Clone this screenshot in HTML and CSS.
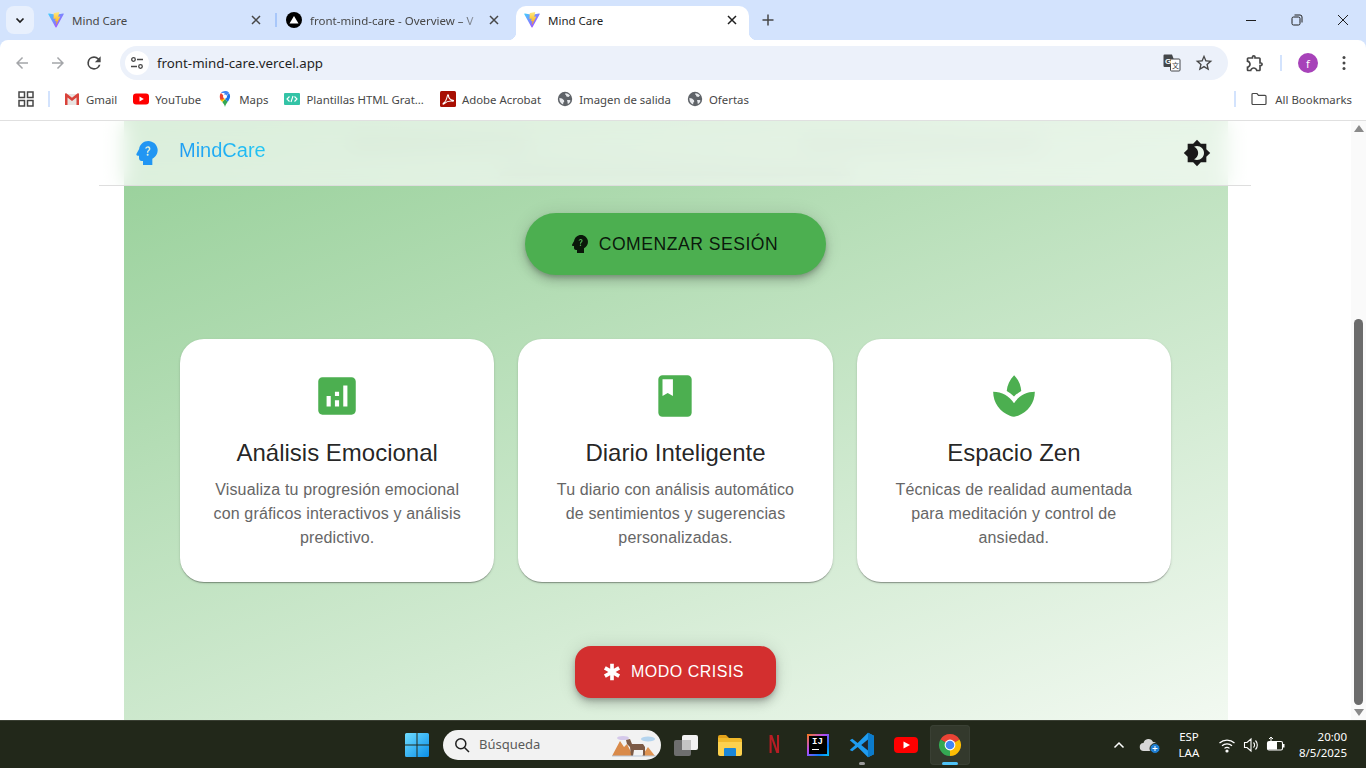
FILE: index.html
```html
<!DOCTYPE html>
<html lang="en">
  <head>
    <meta charset="UTF-8" />
    <meta name="viewport" content="width=device-width, initial-scale=1.0" />
    <title>Mind Care</title>
    <link rel="stylesheet" href="styles.css">
  </head>
  <body>
    <svg class="defs" width="0" height="0">
      <defs>
        <linearGradient id="viteBody" x1="0" y1="0" x2="1" y2="1">
          <stop offset="0" stop-color="#41d1ff" />
          <stop offset="1" stop-color="#bd34fe" />
        </linearGradient>
        <linearGradient id="viteBolt" x1="0" y1="0" x2="0" y2="1">
          <stop offset="0" stop-color="#ffea83" />
          <stop offset="1" stop-color="#ffa800" />
        </linearGradient>
        <symbol id="vite" viewBox="0 0 16 16">
          <path fill="url(#viteBody)" d="M.3 2.3 7.5 15.3c.2.4.8.4 1 0l7.2-13c.2-.4-.1-.9-.6-.8L8 2.7 1 1.5c-.5-.1-.9.4-.7.8z" />
          <path fill="url(#viteBolt)" d="M11.2.1 6 1.1c-.1 0-.2.1-.2.2l-.3 5.4c0 .1.1.2.3.2l1.4-.3c.2 0 .3.1.3.3l-.4 2c0 .2.1.3.3.3l.9-.3c.2 0 .3.1.3.3l-.7 3.2c0 .2.2.3.3.1l.1-.1 3.9-7.7c.1-.2-.1-.3-.2-.3l-1.4.3c-.2 0-.3-.1-.3-.3l.9-3.9c.1-.2-.1-.4-.3-.3z" />
        </symbol>
        <symbol id="globe" viewBox="0 0 16 16">
          <circle cx="8" cy="8" r="7.2" fill="#5f6368" />
          <path fill="#e8eaed" d="M8.5 2.2c2 .1 3.6 1 4.5 2.3l-1.6 1.4-1.9-.3-.6-1.5L8 3.3zM2.4 7l2.6.5 2 1.7.2 1.5-1 1v1.7C4.2 13 2.4 10.800 2.400 8zM10 9h2.800l.7.7c-.4 1.400-1.400 2.600-2.700 3.200l-.3-2z" />
        </symbol>
      </defs>
    </svg>

    <!-- Browser tabs -->
    <div class="tab-strip">
      <div class="tab-search">
        <svg viewBox="0 0 12 12" width="12" height="12"><path d="M2.500 4.500 6 8l3.500-3.500" fill="none" stroke="#1f1f1f" stroke-width="1.700" /></svg>
      </div>
      <div class="tab tab-first">
        <svg class="favicon" width="16" height="16"><use href="#vite" /></svg>
        <span class="tab-title">Mind Care</span>
        <svg class="tab-close" viewBox="0 0 16 16" width="16" height="16"><path d="M4 4l8 8M12 4l-8 8" /></svg>
      </div>
      <div class="tab-sep"></div>
      <div class="tab tab-second">
        <svg class="favicon" viewBox="0 0 16 16" width="16" height="16"><circle cx="8" cy="8" r="8" fill="#000" /><path d="M8 4l4.500 7.500h-9z" fill="#fff" /></svg>
        <span class="tab-title tab-title-fade">front-mind-care - Overview – V</span>
        <svg class="tab-close" viewBox="0 0 16 16" width="16" height="16"><path d="M4 4l8 8M12 4l-8 8" /></svg>
      </div>
      <div class="tab tab-active">
        <svg class="favicon" width="16" height="16"><use href="#vite" /></svg>
        <span class="tab-title">Mind Care</span>
        <svg class="tab-close" viewBox="0 0 16 16" width="16" height="16"><path d="M4 4l8 8M12 4l-8 8" /></svg>
      </div>
      <svg class="tab-new" viewBox="0 0 16 16" width="16" height="16"><path d="M8 2.500v11M2.500 8h11" /></svg>
      <div class="window-controls">
        <svg viewBox="0 0 12 12" width="12" height="12"><path d="M1 6.500h10" /></svg>
        <svg viewBox="0 0 12 12" width="12" height="12"><rect x="1" y="3" width="8" height="8" rx="1.500" /><path d="M3.500 1h5.500a2 2 0 0 1 2 2v5.500" /></svg>
        <svg viewBox="0 0 12 12" width="12" height="12"><path d="M1 1l10 10M11 1L1 11" /></svg>
      </div>
    </div>

    <!-- Address bar -->
    <div class="toolbar">
      <div class="tool-btn"><svg viewBox="0 0 24 24" width="18" height="18"><path fill="#a4a6a9" d="M20 11H7.830l5.590-5.590L12 4l-8 8 8 8 1.410-1.410L7.830 13H20z" /></svg></div>
      <div class="tool-btn"><svg viewBox="0 0 24 24" width="18" height="18"><path fill="#a4a6a9" d="M4 11h12.170l-5.590-5.590L12 4l8 8-8 8-1.410-1.410L16.170 13H4z" /></svg></div>
      <div class="tool-btn"><svg viewBox="0 0 24 24" width="20" height="20"><path fill="#474747" d="M17.650 6.350A7.960 7.960 0 0 0 12 4a8 8 0 1 0 7.730 10h-2.080A6 6 0 1 1 12 6c1.660 0 3.140.690 4.220 1.780L13 11h7V4l-2.350 2.350z" /></svg></div>
      <div class="omnibox">
        <div class="site-info">
          <svg viewBox="0 0 16 16" width="16" height="16" fill="none" stroke="#474747" stroke-width="1.300"><circle cx="4.500" cy="4.500" r="1.800" /><path d="M8 4.500h6M2 11.500h6" /><circle cx="11.500" cy="11.500" r="1.800" /></svg>
        </div>
        <span class="url">front-mind-care.vercel.app</span>
        <div class="omni-btn">
          <svg viewBox="0 0 18 18" width="18" height="18">
            <path fill="#44474a" d="M1.500 .5h7.500l1.500 4v8.500h-9a1 1 0 0 1-1-1v-10.500a1 1 0 0 1 1-1z" />
            <rect x="7.500" y="5" width="9.500" height="12" rx="1" fill="#fff" stroke="#44474a" />
            <text x="2" y="10" class="translate-g">G</text>
            <text x="9" y="14" class="translate-a">文</text>
          </svg>
        </div>
        <div class="omni-btn">
          <svg viewBox="0 0 24 24" width="20" height="20"><path fill="#474747" d="M22 9.240l-7.190-.620L12 2 9.190 8.630 2 9.240l5.460 4.730L5.820 21 12 17.270 18.180 21l-1.630-7.030L22 9.240zM12 15.400l-3.760 2.270 1-4.280-3.320-2.880 4.380-.380L12 6.100l1.710 4.040 4.380.380-3.320 2.880 1 4.280L12 15.400z" /></svg>
        </div>
      </div>
      <div class="tool-btn tool-ext"><svg viewBox="0 0 24 24" width="20" height="20"><path fill="#474747" d="M10.500 4.500c.280 0 .5.220.5.5v2h6v6h2c.280 0 .5.220.5.5s-.220.5-.5.5h-2v6h-2.120c-.680-1.750-2.390-3-4.380-3s-3.700 1.250-4.380 3H4v-2.120c1.750-.680 3-2.390 3-4.380 0-1.990-1.240-3.700-2.990-4.380L4 7h6V5c0-.280.220-.5.5-.5m0-2C9.120 2.500 8 3.620 8 5H4c-1.100 0-1.990.9-1.990 2v3.800h.290c1.490 0 2.700 1.210 2.700 2.700s-1.210 2.700-2.700 2.700H2V20c0 1.100.9 2 2 2h3.800v-.3c0-1.490 1.210-2.700 2.700-2.700s2.700 1.210 2.700 2.700v.3H17c1.100 0 2-.9 2-2v-4c1.380 0 2.500-1.120 2.500-2.500S20.380 11 19 11V7c0-1.100-.9-2-2-2h-4c0-1.380-1.120-2.500-2.500-2.500z" /></svg></div>
      <div class="tool-sep"></div>
      <div class="tool-btn tool-avatar"><span class="avatar">f</span></div>
      <div class="tool-btn tool-menu"><svg viewBox="0 0 16 16" width="16" height="16"><circle cx="8" cy="2.500" r="1.500" fill="#474747" /><circle cx="8" cy="8" r="1.500" fill="#474747" /><circle cx="8" cy="13.500" r="1.500" fill="#474747" /></svg></div>
    </div>

    <!-- Bookmarks -->
    <div class="bookmarks">
      <svg class="bm-apps" viewBox="0 0 16 16" width="16" height="16" fill="none" stroke="#474747" stroke-width="1.500"><rect x="1" y="1" width="5.500" height="5.500" /><rect x="9.500" y="1" width="5.500" height="5.500" /><rect x="1" y="9.500" width="5.500" height="5.500" /><rect x="9.500" y="9.500" width="5.500" height="5.500" /></svg>
      <div class="bm-sep"></div>
      <div class="bm">
        <svg viewBox="0 0 16 16" width="16" height="16"><path fill="#e8e3e1" d="M1 3h14v11H1z" /><path fill="#d9423a" d="M1 3.200V14h2.500V6.500L8 10l4.500-3.500V14H15V3.200c0-.8-1-1.200-1.600-.7L8 6.700 2.600 2.500C2 2 1 2.400 1 3.200z" /></svg>
        <span>Gmail</span>
      </div>
      <div class="bm">
        <svg viewBox="0 0 16 16" width="16" height="16"><rect y="2.500" width="16" height="11" rx="3" fill="#f00" /><path d="M6.500 5.500 10.800 8l-4.300 2.500z" fill="#fff" /></svg>
        <span>YouTube</span>
      </div>
      <div class="bm">
        <svg viewBox="0 0 16 16" width="16" height="16">
          <path fill="#34a853" d="M8 16c-.4-2-1.500-3.500-2.700-5L8 8l2.800 2.800C9.500 12.500 8.400 14 8 16z" />
          <path fill="#fbbc04" d="M3 8.200c.6 1.100 1.400 1.900 2.300 2.800L8 8 5.800 5.500z" />
          <path fill="#4285f4" d="M8 0c1.500 0 3 .7 3.900 1.900L8 6.500 7 5z" />
          <path fill="#ea4335" d="M4 1.900 7.900 6 5.800 8.500 3.300 8.500C2.500 6 2.500 3.500 4 1.900z" />
          <path fill="#1a73e8" d="M11.900 1.900c1.600 2 1.500 4.700.2 6.700-.4.800-.8 1.500-1.300 2.200L8 8z" />
          <path fill="#4285f4" d="M11.900 1.900 4 1.900C5 .7 6.500 0 8 0s3 .7 3.900 1.900z" />
          <circle cx="8" cy="5.400" r="2" fill="#fff" />
        </svg>
        <span>Maps</span>
      </div>
      <div class="bm">
        <svg viewBox="0 0 16 16" width="16" height="16"><rect y="2" width="16" height="12" rx="1" fill="#33c3a6" /><path d="M5.500 5.500 3 8l2.500 2.500M10.500 5.500 13 8l-2.500 2.500M9 5 7 11" fill="none" stroke="#fff" stroke-width="1.100" /></svg>
        <span>Plantillas HTML Grat...</span>
      </div>
      <div class="bm">
        <svg viewBox="0 0 16 16" width="16" height="16"><rect width="16" height="16" rx="1.500" fill="#a80f03" /><path d="M3 12.500c2-1 3.500-3.500 4.500-8 .1-1 1.100-1 1 0-.2 2 1.500 4.500 4.500 4.800.8.100.6.900-.2.800-3-.3-6.500.5-8.500 2.500-1 .9-1.900.4-.8-.1z" fill="none" stroke="#fff" stroke-width="1.100" /></svg>
        <span>Adobe Acrobat</span>
      </div>
      <div class="bm">
        <svg width="16" height="16"><use href="#globe" /></svg>
        <span>Imagen de salida</span>
      </div>
      <div class="bm">
        <svg width="16" height="16"><use href="#globe" /></svg>
        <span>Ofertas</span>
      </div>
      <div class="bm-sep bm-sep-right"></div>
      <div class="bm bm-all">
        <svg viewBox="0 0 16 16" width="16" height="16"><path d="M1 3.500a1 1 0 0 1 1-1h4l1.500 1.800H14a1 1 0 0 1 1 1v7.200a1 1 0 0 1-1 1H2a1 1 0 0 1-1-1z" fill="none" stroke="#474747" stroke-width="1.200" /></svg>
        <span>All Bookmarks</span>
      </div>
    </div>

    <!-- Page -->
    <div class="page">
      <div class="page-main">
        <header class="app-header">
          <svg class="brand-icon" viewBox="0 0 24 24" width="32" height="32"><path d="M19.940 9.060C19.500 5.730 16.570 3 13 3 9.470 3 6.570 5.610 6.080 9l-1.930 3.480c-.410.660.070 1.520.850 1.520h1v2c0 1.100.9 2 2 2h1v3h7v-4.680c2.620-1.250 4.350-4.080 3.940-7.260zM12.500 14c-.410 0-.740-.330-.740-.740s.330-.730.740-.730c.410 0 .730.320.730.730s-.320.740-.730.740zm1.760-4.320c-.440.650-.860.850-1.090 1.270-.090.170-.130.280-.130.820h-1.060c0-.290-.040-.750.180-1.160.280-.510.830-.810 1.140-1.260.330-.470.150-1.360-.8-1.360-.620 0-.920.470-1.050.86l-.960-.4C11.220 7.680 11.760 7 12.710 7c.790 0 1.330.360 1.600.81.240.39.370 1.120.010 1.870z" /></svg>
          <span class="brand-name">MindCare</span>
          <svg class="theme-icon" viewBox="0 0 24 24" width="28" height="28"><path d="M20 8.690V4h-4.690L12 .69 8.690 4H4v4.690L.69 12 4 15.310V20h4.690L12 23.310 15.310 20H20v-4.690L23.310 12 20 8.690zM12 18c-.890 0-1.740-.2-2.500-.55C11.560 16.500 13 14.420 13 12s-1.440-4.500-3.500-5.450C10.260 6.200 11.110 6 12 6c3.310 0 6 2.690 6 6s-2.690 6-6 6z" /></svg>
        </header>

        <main class="panel">
          <!-- what has scrolled under the header, only seen through the blur -->
          <div class="under-header">
            <div class="streak-row"><span class="streak streak-a"></span><span class="streak streak-b"></span></div>
            <div class="streak-row streak-row-low"><span class="streak streak-c"></span></div>
          </div>

          <button class="btn-start">
            <svg viewBox="0 0 24 24" width="24" height="24"><path d="M19.940 9.060C19.500 5.730 16.570 3 13 3 9.470 3 6.570 5.610 6.080 9l-1.930 3.480c-.410.660.070 1.520.850 1.520h1v2c0 1.100.9 2 2 2h1v3h7v-4.680c2.620-1.250 4.350-4.080 3.940-7.260zM12.500 14c-.410 0-.740-.330-.740-.740s.330-.730.740-.730c.410 0 .730.320.730.730s-.320.740-.730.740zm1.760-4.320c-.440.650-.860.850-1.090 1.270-.090.170-.130.280-.130.820h-1.060c0-.290-.040-.750.180-1.160.280-.510.830-.810 1.140-1.260.330-.470.150-1.360-.8-1.360-.620 0-.920.470-1.050.86l-.960-.4C11.220 7.680 11.760 7 12.710 7c.790 0 1.330.360 1.600.81.240.39.370 1.120.010 1.870z" /></svg>
            COMENZAR SESIÓN
          </button>

          <div class="cards">
            <div class="card">
              <svg viewBox="0 0 24 24" width="50" height="50"><path d="M19 3H5c-1.100 0-2 .9-2 2v14c0 1.100.9 2 2 2h14c1.100 0 2-.9 2-2V5c0-1.100-.9-2-2-2zM9 17H7v-5h2v5zm4 0h-2v-3h2v3zm0-5h-2v-2h2v2zm4 5h-2V7h2v10z" /></svg>
              <h3>Análisis Emocional</h3>
              <p>Visualiza tu progresión emocional con gráficos interactivos y análisis predictivo.</p>
            </div>
            <div class="card">
              <svg viewBox="0 0 24 24" width="50" height="50"><path d="M18 2H6c-1.100 0-2 .9-2 2v16c0 1.100.9 2 2 2h12c1.100 0 2-.9 2-2V4c0-1.100-.9-2-2-2zM6 4h5v8l-2.500-1.500L6 12V4z" /></svg>
              <h3>Diario Inteligente</h3>
              <p>Tu diario con análisis automático de sentimientos y sugerencias personalizadas.</p>
            </div>
            <div class="card">
              <svg viewBox="0 0 24 24" width="50" height="50"><path d="M15.490 9.630c-.180-2.790-1.310-5.510-3.430-7.630-2.140 2.140-3.320 4.860-3.550 7.630 1.280.680 2.460 1.560 3.490 2.630 1.030-1.060 2.210-1.940 3.490-2.630zM12 15.450C9.850 12.170 6.180 10 2 10c0 5.320 3.360 9.820 8.030 11.490.630.230 1.290.4 1.970.51.680-.120 1.330-.290 1.970-.51C18.640 19.820 22 15.320 22 10c-4.180 0-7.850 2.170-10 5.450z" /></svg>
              <h3>Espacio Zen</h3>
              <p>Técnicas de realidad aumentada para meditación y control de ansiedad.</p>
            </div>
          </div>

          <button class="btn-crisis">
            <svg viewBox="0 0 24 24" width="22" height="22"><path d="m20.790 9.230-2-3.460L14 8.540V3h-4v5.540L5.210 5.770l-2 3.460L8 12l-4.790 2.770 2 3.460L10 15.460V21h4v-5.540l4.790 2.770 2-3.460L16 12z" /></svg>
            MODO CRISIS
          </button>
        </main>
      </div>

      <div class="scrollbar">
        <span class="arrow-up"></span>
        <div class="scroll-track"><div class="scroll-thumb"></div></div>
        <span class="arrow-down"></span>
      </div>
    </div>

    <!-- Windows taskbar -->
    <div class="taskbar">
      <div class="task-slot task-win">
        <svg viewBox="0 0 24 24" width="24" height="24">
          <defs><linearGradient id="winBlue" x1="0" y1="0" x2="1" y2="1"><stop offset="0" stop-color="#6fdcff" /><stop offset="1" stop-color="#0a8fe8" /></linearGradient></defs>
          <path fill="url(#winBlue)" d="M0 1.500A1.500 1.500 0 0 1 1.500 0h10v11.500H0zM12.500 0h10A1.500 1.500 0 0 1 24 1.500v10H12.500zM0 12.500h11.500V24h-10A1.500 1.500 0 0 1 0 22.500zM12.500 12.500H24v10a1.500 1.500 0 0 1-1.500 1.500h-10z" />
        </svg>
      </div>
      <div class="task-search">
        <svg viewBox="0 0 16 16" width="16" height="16" fill="none" stroke="#1f1f1f" stroke-width="1.500"><circle cx="6.800" cy="6.800" r="5" /><path d="M10.500 10.500 15 15" /></svg>
        <span>Búsqueda</span>
        <svg class="search-art" viewBox="0 0 46 26" width="46" height="26">
          <ellipse cx="12" cy="6" rx="6" ry="2" fill="#d5c9ea" />
          <ellipse cx="37" cy="7" rx="7" ry="2.500" fill="#b4d4ee" />
          <path d="M1 24 9 9l4 6 3-3 6 12z" fill="#d98a4a" />
          <path d="M31 24l6-9 7 9z" fill="#e09452" />
          <path d="M15 8l4-1 2 5h11l2 3v9h-2v-6h-9l-1 6h-2l-1-9-3-3z" fill="#7c5a45" />
          <path d="M1 24h44" stroke="#b7c6d8" />
        </svg>
      </div>
      <div class="task-slot task-first">
        <svg viewBox="0 0 24 24" width="24" height="24"><rect x="8" y="2" width="16" height="15" rx="2" fill="#f2f2f2" /><rect x="0" y="7" width="17" height="16" rx="2" fill="#6e6e6e" /><rect x="8" y="7" width="9" height="10" fill="#c4c4c4" /></svg>
      </div>
      <div class="task-slot">
        <svg viewBox="0 0 24 24" width="24" height="24"><path d="M0 4a2 2 0 0 1 2-2h6l3 3h-11z" fill="#e3a21a" /><path d="M0 5h22a2 2 0 0 1 2 2v4H0z" fill="#f0b92b" /><path d="M0 9h24v12a2 2 0 0 1-2 2H2a2 2 0 0 1-2-2z" fill="#fcd14e" /><path d="M6 16a1 1 0 0 1 1-1h10a1 1 0 0 1 1 1v7H6z" fill="#1a86d8" /></svg>
      </div>
      <div class="task-slot"><span class="netflix">N</span></div>
      <div class="task-slot">
        <div class="ij-logo"><div class="ij-inner"><span>IJ</span><i></i></div></div>
      </div>
      <div class="task-slot task-running">
        <svg viewBox="0 0 24 24" width="26" height="26"><path d="M17.500.8 23 3.500v17l-5.500 2.700L8 13.800l-5 3.900L.7 16.500 5.800 12 .7 7.500 3 6.300l5 3.900z" fill="#1f9cf0" /><path d="M17.500.8 23 3.500v17l-5.500 2.700z" fill="#0b7bcb" /><path d="M17.500 7 11.300 12l6.200 5z" fill="#22262a" /></svg>
      </div>
      <div class="task-slot">
        <svg viewBox="0 0 24 16" width="24" height="16"><rect width="24" height="16" rx="4" fill="#f00" /><path d="M9.500 4.500 16 8l-6.500 3.500z" fill="#fff" /></svg>
      </div>
      <div class="task-slot task-active">
        <svg viewBox="0 0 24 24" width="24" height="24">
          <path fill="#ea4335" d="M12 12 2.470 6.500a11 11 0 0 1 19.060 0z" />
          <path fill="#fbbc04" d="M12 12 21.530 6.500A11 11 0 0 1 12 23z" />
          <path fill="#34a853" d="M12 12 12 23A11 11 0 0 1 2.470 6.500z" />
          <circle cx="12" cy="12" r="5.400" fill="#fff" />
          <circle cx="12" cy="12" r="4.300" fill="#4285f4" />
        </svg>
      </div>

      <div class="tray">
        <svg class="tray-icon" viewBox="0 0 24 24" width="24" height="24" fill="none" stroke="#fff" stroke-width="1.500"><path d="M7.500 14.500 12 10l4.500 4.500" /></svg>
        <svg class="tray-icon tray-cloud" viewBox="0 0 24 24" width="24" height="24"><path d="M5 18a4 4 0 0 1-.5-8A5 5 0 0 1 14 9a4 4 0 0 1 4 4v5z" fill="#d7d7d7" /><circle cx="16" cy="15.500" r="5" fill="#1e7fd4" stroke="#22281a" /><path d="M13.500 15.500h5M16 13v5" stroke="#fff" /></svg>
        <div class="tray-lang">ESP<br />LAA</div>
        <svg class="tray-icon" viewBox="0 0 24 24" width="24" height="24" fill="none" stroke="#fff" stroke-width="1.200"><path d="M4.500 10a11 11 0 0 1 15 0M7 12.800a7.500 7.500 0 0 1 10 0M9.500 15.400a3.800 3.800 0 0 1 5 0" /><circle cx="12" cy="18" r="1" fill="#fff" /></svg>
        <svg class="tray-icon" viewBox="0 0 24 24" width="24" height="24" fill="none" stroke="#fff" stroke-width="1.100"><path d="M5.500 9.500h2.500L12 6v12l-4-3.500H5.500zM14.500 9.500a3.500 3.500 0 0 1 0 5M16.500 7.500a6.500 6.500 0 0 1 0 9" /></svg>
        <svg class="tray-icon" viewBox="0 0 24 24" width="24" height="24"><rect x="4.500" y="8.500" width="15" height="8.500" rx="1.500" fill="none" stroke="#fff" stroke-width="1.100" /><rect x="20" y="11" width="1.500" height="3.500" fill="#fff" /><path d="M5 9h9v7.500H5z" fill="#fff" /><path d="M8 4v5M6 6l2-2 2 2" stroke="#fff" fill="none" /></svg>
        <div class="tray-clock">20:00<br />8/5/2025</div>
      </div>
    </div>
  </body>
</html>
```

FILE: styles.css
```css
* {
  box-sizing: border-box;
}
html,
body {
  margin: 0;
  height: 100%;
  overflow: hidden;
}
body {
  display: flex;
  flex-direction: column;
  width: 1366px;
  height: 768px;
  background-color: #d3e3fd;
  font-family: "Noto Sans", "Liberation Sans", sans-serif;
}
.defs {
  position: absolute;
}

/* tabs */
.tab-strip {
  display: flex;
  align-items: flex-start;
  height: 40px;
  padding-top: 6px;
  background-color: #d3e3fd;
}
.tab-search {
  display: flex;
  align-items: center;
  justify-content: center;
  width: 28px;
  height: 28px;
  margin-left: 6px;
  margin-right: 6px;
  border-radius: 8px;
  background-color: #e8f0fd;
}
.tab {
  position: relative;
  display: flex;
  align-items: center;
  height: 28px;
  padding-left: 8px;
  font-size: 11.500px;
  color: #474747;
}
.tab-first {
  width: 235px;
  padding-right: 11px;
}
.tab-second {
  width: 235px;
  margin-left: 1px;
  padding-right: 11px;
}
.tab-active {
  width: 233px;
  height: 34px;
  margin-left: 3px;
  padding-right: 9px;
  padding-bottom: 6px;
  background-color: #fff;
  border-radius: 10px 10px 0 0;
  color: #1f1f1f;
}
.tab-active::before,
.tab-active::after {
  content: "";
  position: absolute;
  bottom: 0;
  width: 8px;
  height: 8px;
}
.tab-active::before {
  left: -8px;
  background: radial-gradient(circle at 0 0, #d3e3fd 8px, #fff 8.5px);
}
.tab-active::after {
  right: -8px;
  background: radial-gradient(circle at 100% 0, #d3e3fd 8px, #fff 8.5px);
}
.favicon {
  flex-shrink: 0;
  margin-right: 8px;
}
.tab-title {
  flex: 1;
  overflow: hidden;
  white-space: nowrap;
}
.tab-title-fade {
  -webkit-mask-image: linear-gradient(to right, #000 85%, transparent 100%);
  mask-image: linear-gradient(to right, #000 85%, transparent 100%);
}
.tab-close {
  flex-shrink: 0;
  fill: none;
  stroke: #474747;
  stroke-width: 1.500;
}
.tab-active .tab-close {
  stroke: #1f1f1f;
}
.tab-sep {
  width: 2px;
  height: 14px;
  margin-top: 7px;
  background-color: #a8c7fa;
}
.tab-new {
  margin-left: 11px;
  margin-top: 6px;
  fill: none;
  stroke: #474747;
  stroke-width: 1.500;
}
.window-controls {
  display: flex;
  margin-left: auto;
  margin-top: 8px;
  margin-right: 17px;
  gap: 34px;
}
.window-controls svg {
  fill: none;
  stroke: #1f1f1f;
  stroke-width: 1;
}

/* address bar */
.toolbar {
  display: flex;
  align-items: center;
  height: 46px;
  padding-left: 4px;
  background-color: #fff;
  border-radius: 8px 8px 0 0;
}
.tool-btn {
  display: flex;
  align-items: center;
  justify-content: center;
  width: 36px;
  height: 32px;
}
.tool-ext {
  width: 32px;
  margin-left: 11px;
}
.tool-avatar {
  width: 32px;
  margin-left: 10px;
}
.tool-menu {
  width: 32px;
  margin-left: 4px;
}
.tool-sep {
  width: 2px;
  height: 16px;
  margin-left: 9px;
  background-color: #d3e3fd;
}
.omnibox {
  display: flex;
  align-items: center;
  width: 1108px;
  height: 34px;
  margin-left: 8px;
  padding-left: 5px;
  padding-right: 8px;
  border-radius: 17px;
  background-color: #ecf1fa;
}
.site-info {
  display: flex;
  align-items: center;
  justify-content: center;
  width: 24px;
  height: 24px;
  border-radius: 50%;
  background-color: #fff;
}
.url {
  flex: 1;
  margin-left: 8px;
  font-size: 13.300px;
  color: #1f1f1f;
}
.omni-btn {
  display: flex;
  align-items: center;
  justify-content: center;
  width: 32px;
  height: 32px;
}
.translate-g {
  font-family: "Liberation Sans", sans-serif;
  font-size: 8px;
  font-weight: 700;
  fill: #fff;
}
.translate-a {
  font-family: "Noto Sans CJK SC", sans-serif;
  font-size: 7px;
  fill: #44474a;
}
.avatar {
  display: flex;
  align-items: center;
  justify-content: center;
  width: 20px;
  height: 20px;
  border-radius: 50%;
  background-color: #a742b9;
  font-size: 11px;
  color: #fff;
}

/* bookmarks */
.bookmarks {
  display: flex;
  align-items: center;
  height: 35px;
  padding-left: 18px;
  padding-bottom: 8px;
  background-color: #fff;
  border-bottom: 1px solid #e0e0e0;
  font-size: 11.400px;
  color: #474747;
}
.bm-apps {
  flex-shrink: 0;
}
.bm-sep {
  width: 2px;
  height: 16px;
  margin-left: 14px;
  margin-right: 14px;
  background-color: #d3e3fd;
}
.bm-sep-right {
  margin-left: auto;
  margin-right: 15px;
}
.bm {
  display: flex;
  align-items: center;
  gap: 6px;
  margin-right: 16px;
  white-space: nowrap;
}
.bm-all {
  gap: 8px;
  margin-right: 14px;
}

/* page */
.page {
  display: flex;
  flex: 1;
  min-height: 0;
  background-color: #fff;
}
.page-main {
  position: relative;
  flex: 1;
  overflow: hidden;
  font-family: "Liberation Sans", Arial, sans-serif;
}
.app-header {
  position: absolute;
  top: 0;
  left: 99px;
  display: flex;
  align-items: center;
  width: 1152px;
  height: 65px;
  padding: 0 40px 0 32px;
  background-color: rgba(255, 255, 255, 0.66);
  backdrop-filter: blur(10px);
  border-bottom: 1px solid #dedede;
}
.brand-icon {
  fill: #2196f3;
}
.brand-name {
  margin-left: 16px;
  margin-bottom: 6px;
  font-size: 20px;
  background: linear-gradient(45deg, #2196f3, #21cbf3);
  -webkit-background-clip: text;
  background-clip: text;
  color: transparent;
}
.theme-icon {
  margin-left: auto;
  fill: #1a1a1a;
}
.panel {
  display: flex;
  flex-direction: column;
  align-items: center;
  width: 1104px;
  height: 100%;
  margin: 0 auto;
  background: linear-gradient(160deg, #95cf97, #f2f9f1);
}
.under-header {
  width: 100%;
  height: 65px;
  margin-bottom: 27px;
  padding-top: 19px;
}
.streak-row {
  display: flex;
  gap: 270px;
  padding-left: 226px;
}
.streak-row-low {
  margin-top: 20px;
  padding-left: 376px;
}
.streak {
  height: 8px;
  background-color: rgba(0, 0, 0, 0.1);
}
.streak-a {
  width: 180px;
}
.streak-b {
  width: 240px;
}
.streak-c {
  width: 350px;
}
.btn-start,
.btn-crisis {
  display: flex;
  align-items: center;
  justify-content: center;
  flex-shrink: 0;
  border: none;
  font-family: inherit;
  cursor: pointer;
}
.btn-start {
  gap: 7px;
  width: 301px;
  height: 62px;
  padding: 0 5px 0 0;
  background-color: #4caf50;
  border-radius: 31px;
  box-shadow: 0 3px 5px -1px rgba(0, 0, 0, 0.2), 0 6px 10px rgba(0, 0, 0, 0.14), 0 1px 18px rgba(0, 0, 0, 0.12);
  font-size: 17.600px;
  letter-spacing: 0.5px;
  color: rgba(0, 0, 0, 0.87);
}
.btn-start svg {
  fill: rgba(0, 0, 0, 0.87);
}
.cards {
  display: grid;
  grid-template-columns: repeat(3, 1fr);
  gap: 24px;
  width: 991px;
  margin-top: 64px;
}
.card {
  display: flex;
  flex-direction: column;
  align-items: center;
  height: 243px;
  padding: 32px 32px 0;
  background-color: #fff;
  border-radius: 24px;
  box-shadow: 0 2px 1px -1px rgba(0, 0, 0, 0.2), 0 1px 1px rgba(0, 0, 0, 0.14), 0 1px 3px rgba(0, 0, 0, 0.12);
  text-align: center;
}
.card svg {
  flex-shrink: 0;
  fill: #4caf50;
}
.card h3 {
  margin: 16px 0 9px;
  font-size: 24px;
  font-weight: 400;
  line-height: 32px;
  color: rgba(0, 0, 0, 0.87);
}
.card p {
  margin: 0;
  font-size: 16px;
  line-height: 24px;
  letter-spacing: 0.15px;
  color: #666;
}
.btn-crisis {
  gap: 8px;
  width: 201px;
  height: 52px;
  margin-top: 64px;
  padding: 0 6px 0 0;
  background-color: #d32f2f;
  border-radius: 16px;
  box-shadow: 0 3px 5px -1px rgba(0, 0, 0, 0.2), 0 6px 10px rgba(0, 0, 0, 0.14), 0 1px 18px rgba(0, 0, 0, 0.12);
  font-size: 16px;
  letter-spacing: 0.5px;
  color: #fff;
}
.btn-crisis svg {
  fill: #fff;
}
.scrollbar {
  display: flex;
  flex-direction: column;
  align-items: center;
  width: 15px;
  background-color: #fafafa;
}
.arrow-up,
.arrow-down {
  width: 0;
  height: 0;
  margin: 4px 0;
  border-left: 5px solid transparent;
  border-right: 5px solid transparent;
}
.arrow-up {
  border-bottom: 7px solid #8a8a8a;
}
.arrow-down {
  border-top: 7px solid #8a8a8a;
}
.scroll-track {
  flex: 1;
  width: 100%;
  display: flex;
  justify-content: center;
}
.scroll-thumb {
  width: 9px;
  height: 386px;
  margin-top: 183px;
  border-radius: 5px;
  background-color: #6b6b6b;
}

/* taskbar */
.taskbar {
  display: flex;
  align-items: center;
  height: 48px;
  padding-left: 397px;
  background-color: #22281a;
  border-top: 1px solid #3a3f33;
}
.task-slot {
  position: relative;
  display: flex;
  align-items: center;
  justify-content: center;
  width: 40px;
  height: 40px;
  margin-right: 4px;
  border-radius: 4px;
}
.task-win {
  margin-right: 6px;
}
.task-first {
  margin-left: 5px;
}
.task-search {
  display: flex;
  align-items: center;
  width: 218px;
  height: 30px;
  padding: 0 4px 0 11px;
  border-radius: 15px;
  background-color: #f2f2f2;
  font-size: 13px;
  line-height: 28px;
  color: #5a5a5a;
}
.task-search span {
  flex: 1;
  margin-left: 9px;
  margin-bottom: 2px;
}
.netflix {
  display: block;
  font-family: "Liberation Sans", sans-serif;
  font-size: 26px;
  font-weight: 700;
  color: #b81d24;
  transform: scaleX(0.62);
}
.ij-logo {
  width: 22px;
  height: 22px;
  padding: 2px;
  background: linear-gradient(135deg, #f97a12, #b74af7 40%, #087cfa 75%, #07c3f2);
}
.ij-inner {
  display: flex;
  flex-direction: column;
  width: 18px;
  height: 18px;
  padding: 1px 3px;
  background-color: #000;
  font-family: "Liberation Mono", monospace;
  font-size: 9px;
  font-weight: 700;
  line-height: 10px;
  color: #fff;
}
.ij-inner i {
  display: block;
  width: 7px;
  height: 1px;
  margin-top: 2px;
  background-color: #fff;
}
.task-running::after {
  content: "";
  position: absolute;
  bottom: 0;
  left: 17px;
  width: 6px;
  height: 3px;
  border-radius: 2px;
  background-color: #9a9a9a;
}
.task-active {
  background-color: #33392c;
  box-shadow: inset 0 0 0 1px #3a4034;
}
.task-active::after {
  content: "";
  position: absolute;
  bottom: 0;
  left: 12px;
  width: 16px;
  height: 3px;
  border-radius: 2px;
  background-color: #4fc3f7;
}
.tray {
  display: flex;
  align-items: center;
  margin-left: auto;
  padding-right: 19px;
  font-family: "Noto Sans", sans-serif;
  font-size: 11.500px;
  line-height: 16px;
  color: #fff;
}
.tray-cloud {
  margin-left: 8px;
}
.tray-lang {
  width: 40px;
  margin-left: 6px;
  margin-right: 6px;
  text-align: center;
}
.tray-clock {
  margin-left: 12px;
  text-align: right;
}
```
